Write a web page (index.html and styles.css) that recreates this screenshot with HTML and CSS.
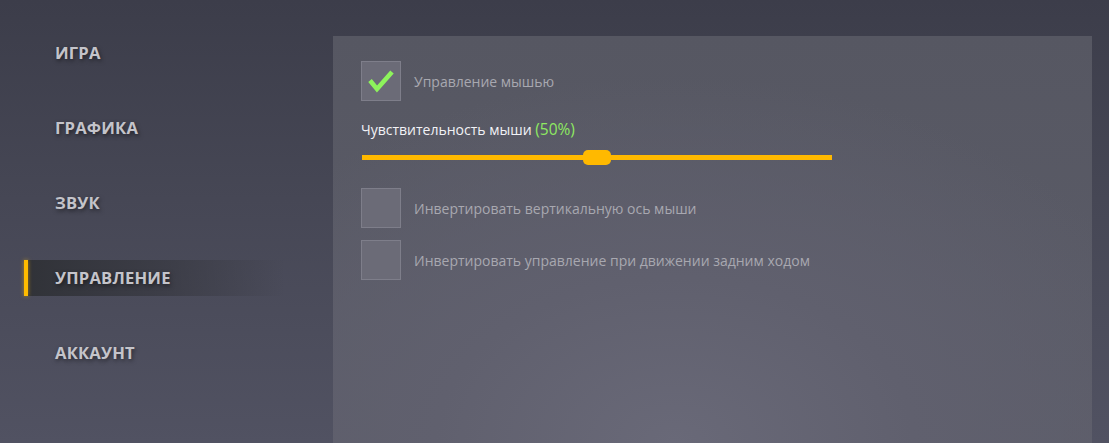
FILE: index.html
```html
<!DOCTYPE html>
<html lang="ru">
<head>
<meta charset="utf-8">
<link rel="stylesheet" href="styles.css">
</head>
<body>
<div class="page">
  <nav class="sidebar">
    <div class="nav-item">ИГРА</div>
    <div class="nav-item">ГРАФИКА</div>
    <div class="nav-item">ЗВУК</div>
    <div class="nav-item active">УПРАВЛЕНИЕ</div>
    <div class="nav-item">АККАУНТ</div>
  </nav>
  <main class="panel">
    <label class="option">
      <span class="box checked">
        <svg width="40" height="40" viewBox="0 0 40 40"><path d="M9 19.5 L16 28 L31 11" fill="none" stroke="#8df35c" stroke-width="4.6" stroke-linecap="butt" stroke-linejoin="miter"/></svg>
      </span>
      <span class="option-text">Управление мышью</span>
    </label>
    <div class="sens">Чувствительность мыши <span class="pct">(50%)</span></div>
    <div class="slider">
      <div class="track"></div>
      <div class="thumb"></div>
    </div>
    <label class="option first-plain">
      <span class="box"></span>
      <span class="option-text">Инвертировать вертикальную ось мыши</span>
    </label>
    <label class="option next">
      <span class="box"></span>
      <span class="option-text">Инвертировать управление при движении задним ходом</span>
    </label>
  </main>
</div>
</body>
</html>
```
FILE: styles.css
```css
html, body {
  margin: 0;
  height: 100%;
}
body {
  background: linear-gradient(180deg, #3c3d4a 0%, #464755 45%, #515262 100%);
  font-family: "Open Sans", "Noto Sans", sans-serif;
  overflow: hidden;
}
.page {
  display: flex;
  height: 443px;
}
.sidebar {
  width: 309px;
  padding: 35px 0 0 24px;
  display: flex;
  flex-direction: column;
  gap: 39px;
  box-sizing: content-box;
}
.nav-item {
  position: relative;
  height: 36px;
  width: 261px;
  line-height: 36px;
  padding-left: 31px;
  box-sizing: border-box;
  font-size: 16.6px;
  font-weight: 700;
  color: #c4c4ca;
  text-shadow: 1px 2px 4px rgba(0,0,0,0.5);
  letter-spacing: 0.2px;
}
.nav-item.active {
  background: linear-gradient(90deg, rgba(44,46,50,0.85) 0%, rgba(52,53,60,0.6) 55%, rgba(70,71,82,0) 100%);
}
.nav-item.active::before {
  content: "";
  position: absolute;
  left: 0;
  top: 0;
  width: 4px;
  height: 36px;
  background: #ffbc00;
  box-shadow: 0 0 4px rgba(255,190,0,0.55);
}
.panel {
  margin-top: 36px;
  width: 759px;
  flex: none;
  padding: 25px 0 0 28px;
  box-sizing: border-box;
  background: radial-gradient(ellipse 70% 90% at 45% 100%, #696978 0%, #60606e 45%, rgba(88,89,100,0) 100%), linear-gradient(180deg, #565762 0%, #5c5d69 100%);
}
.option {
  display: flex;
  align-items: center;
  gap: 13px;
}
.box {
  width: 40px;
  height: 40px;
  box-sizing: border-box;
  border: 1px solid #7e7e8a;
  background: #6b6b77;
  display: block;
  flex: none;
}
.box svg {
  display: block;
  margin: -1px;
}
.option-text {
  font-size: 14px;
  color: #a8a8b0;
  padding-top: 1px;
}
.sens {
  margin-top: 17px;
  height: 22px;
  line-height: 22px;
  font-size: 14px;
  color: #f2f2f6;
  letter-spacing: 0;
}
.pct {
  color: #8ee962;
  font-size: 15.5px;
  letter-spacing: 0;
}
.slider {
  position: relative;
  margin-top: 10px;
  width: 470px;
  height: 15px;
  margin-left: 1px;
}
.track {
  position: absolute;
  left: 0;
  right: 0;
  top: 5px;
  height: 5px;
  background: #ffb900;
}
.thumb {
  position: absolute;
  left: 221px;
  top: 0;
  width: 28px;
  height: 15px;
  border-radius: 5px;
  background: #ffb900;
}
.first-plain {
  margin-top: 23px;
}
.next {
  margin-top: 12px;
}
```
